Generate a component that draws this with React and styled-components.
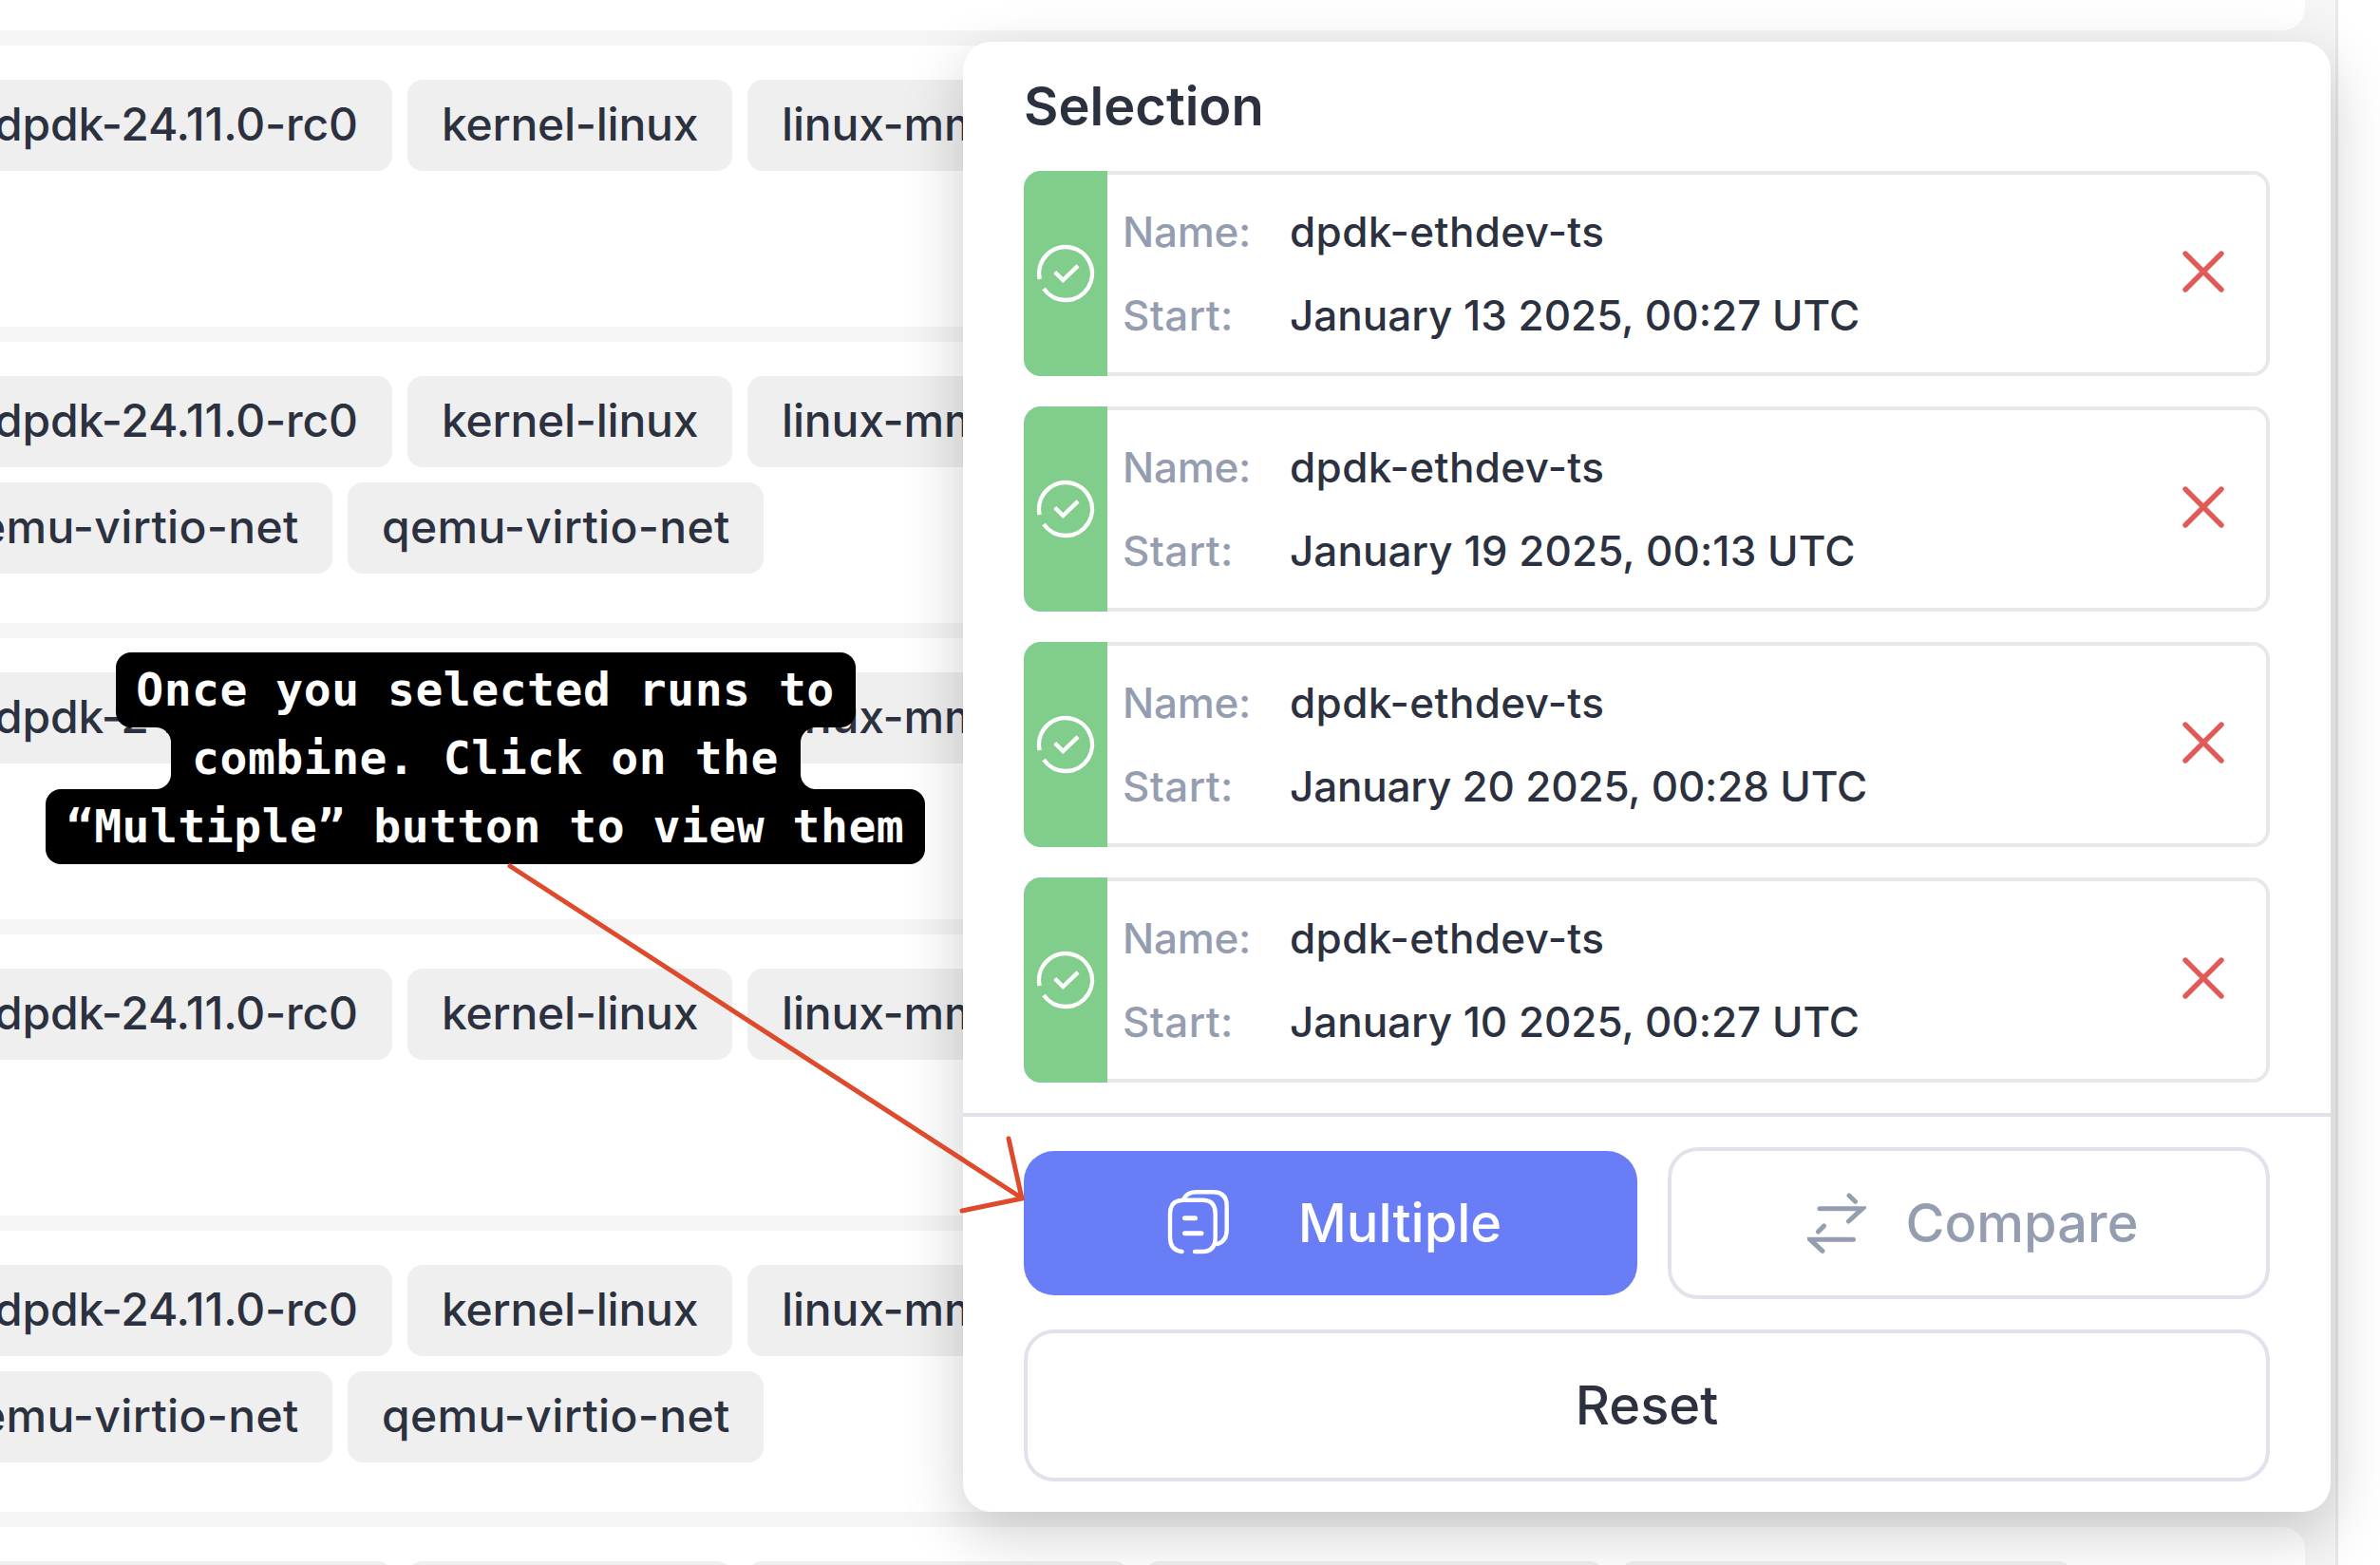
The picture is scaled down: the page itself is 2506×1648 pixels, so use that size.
import React from "react";
import styled, { createGlobalStyle, css } from "styled-components";

const GlobalStyle = createGlobalStyle`
  * { box-sizing: border-box; }
  body { margin: 0; overflow: hidden; font-family: Inter, "Liberation Sans", sans-serif; color: #2b313f; }
`;

const Page = styled.div`
  position: relative;
  width: 2506px;
  height: 1648px;
  display: flex;
  overflow: hidden;
  background: #fff;
`;

const RunList = styled.main`
  width: 2462px;
  flex: none;
  display: flex;
  flex-direction: column;
  gap: 16px;
  padding-right: 32px;
  border-right: 3px solid #e8e8e8;
  background: #f5f5f5;
  overflow: hidden;
`;

const RunCard = styled.article`
  height: ${(p) => (p.$stub ? 32 : 296)}px;
  flex: none;
  display: flex;
  flex-direction: column;
  gap: 16px;
  padding-top: ${(p) => (p.$stub ? 0 : 36)}px;
  background: #fff;
  border-radius: ${(p) => (p.$stub ? "0 0 24px 0" : "0 24px 24px 0")};
`;

const TagRow = styled.div`
  display: flex;
  gap: 16px;
  margin-left: ${(p) => -p.$shift}px;
`;

const Tag = styled.span`
  flex: none;
  width: ${(p) => p.$width}px;
  height: 96px;
  line-height: 94px;
  padding-left: 36px;
  border-radius: 16px;
  background: #efefef;
  font-size: 48px;
  font-weight: 500;
  letter-spacing: ${(p) => p.$track || 0}px;
  white-space: nowrap;
`;

const Panel = styled.aside`
  position: absolute;
  left: 1014px;
  top: 44px;
  width: 1440px;
  height: 1548px;
  border-radius: 30px;
  background: #fff;
  box-shadow: 0 22px 64px rgba(0, 0, 0, 0.195);
`;

const PanelBody = styled.div`
  height: 1132px;
  padding: 34px 64px 0;
  border-bottom: 4px solid #e1e3ec;
`;

const Title = styled.h2`
  margin: 0 0 34px;
  font-size: 56px;
  font-weight: 600;
  line-height: 68px;
`;

const Runs = styled.ul`
  display: flex;
  flex-direction: column;
  gap: 32px;
  margin: 0;
  padding: 0;
  list-style: none;
`;

const RunItem = styled.li`
  height: 216px;
  display: flex;
  align-items: stretch;
  border: 4px solid #e8e8e8;
  border-left: 0;
  border-radius: 18px;
`;

const Status = styled.div`
  width: 88px;
  margin: -4px 0;
  display: flex;
  align-items: center;
  justify-content: center;
  border-radius: 18px 0 0 18px;
  background: #80cd8c;
`;

const Fields = styled.dl`
  flex: 1;
  display: grid;
  grid-template-columns: 176px 1fr;
  grid-auto-rows: 88px;
  align-content: center;
  margin: 0 0 0 16px;
  font-size: 44px;
  font-weight: 500;
  line-height: 88px;
`;

const Label = styled.dt`
  color: #959eb0;
  letter-spacing: ${(p) => p.$track || 0}px;
`;

const Value = styled.dd`
  margin: 0;
  letter-spacing: ${(p) => p.$track || 0}px;
`;

const Remove = styled.button`
  width: 60px;
  margin-right: 36px;
  padding: 0 0 4px;
  border: 0;
  background: none;
  display: flex;
  align-items: center;
  justify-content: center;
`;

const Actions = styled.div`
  display: grid;
  grid-template-columns: 646px 634px;
  grid-auto-rows: 160px;
  gap: 32px;
  padding: 32px 64px;
  align-items: center;
`;

const Button = styled.button`
  height: 160px;
  display: flex;
  align-items: center;
  justify-content: center;
  gap: ${(p) => p.$gap || 0}px;
  padding: 0 0 0 ${(p) => p.$nudge || 0}px;
  border: 4px solid #e1e3ec;
  border-radius: 32px;
  background: #fff;
  color: #2b313f;
  font: 500 56px Inter, "Liberation Sans", sans-serif;
  ${(p) => p.$wide && css`grid-column: 1 / -1;`}
  ${(p) => p.$muted && css`color: #959eb0;`}
  ${(p) => p.$primary && css`
    height: 152px;
    border: 0;
    background: #687df6;
    color: #fff;
  `}
`;

const Callout = styled.div`
  position: absolute;
  left: 48px;
  top: 687px;
  width: 926px;
  display: flex;
  flex-direction: column;
  align-items: center;
  color: #fff;
  font: 700 48px/78px "DejaVu Sans Mono", "Liberation Mono", monospace;
  letter-spacing: 0.52px;
  white-space: nowrap;
`;

const CalloutLine = styled.span`
  height: 79px;
  width: ${(p) => p.$width}px;
  border-radius: 16px;
  background: #000;
  text-align: center;
`;

const CalloutNeck = styled.span`
  position: relative;
  height: 65px;
  line-height: 65px;
  width: 663px;
  background: #000;
  text-align: center;
  &::before, &::after {
    content: "";
    position: absolute;
    top: 0;
    width: 16px;
    height: 65px;
    background:
      radial-gradient(circle at var(--x) 16px, transparent 15.5px, #000 16.5px) top / 16px 16px no-repeat,
      radial-gradient(circle at var(--x) 0, transparent 15.5px, #000 16.5px) bottom / 16px 16px no-repeat;
  }
  &::before { right: 100%; --x: 0px; }
  &::after { left: 100%; --x: 16px; }
`;

const Arrow = styled.svg`
  position: absolute;
  left: 520px;
  top: 900px;
  fill: none;
  stroke: #dd4a2c;
  stroke-width: 5;
  stroke-linecap: round;
`;

const CheckIcon = () => (
  <svg width="64" height="64" viewBox="0 0 64 64" fill="none" stroke="#fff" strokeWidth="4.4">
    <path d="M4.65 38 A28 28 0 1 1 9 48" />
    <path d="M20.7 30.5 L29.3 39 L45 23.8" />
  </svg>
);

const CrossIcon = () => (
  <svg width="48" height="48" viewBox="0 0 48 48" fill="none" stroke="#e05a57" strokeWidth="5.4" strokeLinecap="round">
    <path d="M5 5 L43 43 M43 5 L5 43" />
  </svg>
);

const CopyIcon = () => (
  <svg width="66" height="70" viewBox="0 1 66 70" fill="none" stroke="#fff" strokeWidth="4.4" strokeLinecap="round">
    <path d="M15.5 66 C7 65 3 60 3 51 V26 Q3 11.7 17 11.7 H37 Q50.7 11.7 50.7 26 V51 C50.7 61 46 66 37 66 H29" />
    <path d="M17.5 10.5 Q21 3.3 31 3.3 H48 Q62.7 3.3 62.7 18 V43 Q62.7 55 53 58" />
    <path d="M18.5 30.7 H29.5 M18.5 46.7 H36" strokeWidth="5" />
  </svg>
);

const SwapIcon = () => (
  <svg width="62" height="64" viewBox="0 0 62 64" fill="none" stroke="#959eb0" strokeWidth="5" strokeLinecap="round">
    <path d="M13 16.7 H58 L43.5 30 M44 3 L50.5 9.2" />
    <path d="M48.5 49.3 H3 L16 61.3 M11.5 41 L17.5 35" />
  </svg>
);

const firstRowTags = [
  { text: "dpdk-24.11.0-rc0", width: 455, track: -0.2 },
  { text: "kernel-linux", width: 342, track: -0.25 },
  { text: "linux-mm", width: 402, track: -0.2 },
];
const lastRowTags = [455, 342, 402, 484, 478];
const cardRows = [1, 2, 1, 1, 2];
const runs = [
  { start: "January 13 2025, 00:27 UTC", track: 0 },
  { start: "January 19 2025, 00:13 UTC", track: 0.06 },
  { start: "January 20 2025, 00:28 UTC", track: -0.17 },
  { start: "January 10 2025, 00:27 UTC", track: -0.04 },
];

export default function App() {
  return (
    <Page>
      <GlobalStyle />
      <RunList>
        <RunCard $stub />
        {cardRows.map((rows, i) => (
          <RunCard key={i}>
            <TagRow $shift={42}>
              {firstRowTags.map((t) => (
                <Tag key={t.text} $width={t.width} $track={t.track}>{t.text}</Tag>
              ))}
            </TagRow>
            {rows === 2 && (
              <TagRow $shift={88}>
                <Tag $width={438} $track={0.33}>qemu-virtio-net</Tag>
                <Tag $width={438} $track={0.33}>qemu-virtio-net</Tag>
              </TagRow>
            )}
          </RunCard>
        ))}
        <RunCard>
          <TagRow $shift={42}>
            {lastRowTags.map((w) => <Tag key={w} $width={w} />)}
          </TagRow>
        </RunCard>
      </RunList>

      <Panel>
        <PanelBody>
          <Title>Selection</Title>
          <Runs>
            {runs.map((run) => (
              <RunItem key={run.start}>
                <Status><CheckIcon /></Status>
                <Fields>
                  <Label $track={-0.3}>Name:</Label>
                  <Value $track={0.38}>dpdk-ethdev-ts</Value>
                  <Label $track={0.35}>Start:</Label>
                  <Value $track={run.track}>{run.start}</Value>
                </Fields>
                <Remove aria-label="Remove"><CrossIcon /></Remove>
              </RunItem>
            ))}
          </Runs>
        </PanelBody>
        <Actions>
          <Button $primary $gap={72} $nudge={8}><CopyIcon />Multiple</Button>
          <Button $muted $gap={41} $nudge={9}><SwapIcon />Compare</Button>
          <Button $wide>Reset</Button>
        </Actions>
      </Panel>

      <Callout>
        <CalloutLine $width={779}>Once you selected runs to</CalloutLine>
        <CalloutNeck>combine. Click on the</CalloutNeck>
        <CalloutLine $width={926}>“Multiple” button to view them</CalloutLine>
      </Callout>
      <Arrow width="570" height="390" viewBox="520 900 570 390">
        <path d="M537 912 L1075 1261 M1062 1199 L1076 1262 L1013 1275" />
      </Arrow>
    </Page>
  );
}
